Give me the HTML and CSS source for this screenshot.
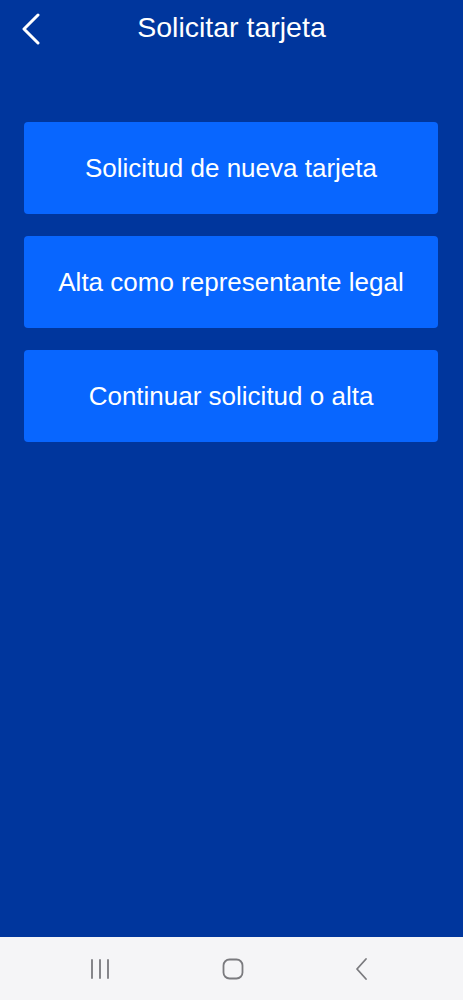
FILE: index.html
```html
<!DOCTYPE html>
<html lang="es">
<head>
<meta charset="utf-8">
<link rel="stylesheet" href="styles.css">
</head>
<body>
<div class="screen">
  <header class="topbar">
    <button class="back" aria-label="Atrás">
      <svg width="20" height="32" viewBox="0 0 20 32"><path d="M16 2 L2 16 L16 30" fill="none" stroke="#fff" stroke-width="3" stroke-linecap="round" stroke-linejoin="round"/></svg>
    </button>
    <h1 class="title">Solicitar tarjeta</h1>
  </header>
  <main class="options">
    <a class="option">Solicitud de nueva tarjeta</a>
    <a class="option">Alta como representante legal</a>
    <a class="option">Continuar solicitud o alta</a>
  </main>
  <nav class="sysnav">
    <svg width="22" height="20" viewBox="0 0 22 20"><path d="M3 1v18M11 1v18M19 1v18" stroke="#7a7a7e" stroke-width="1.8" stroke-linecap="round"/></svg>
    <svg width="22" height="22" viewBox="0 0 22 22"><rect x="1.5" y="1.5" width="19" height="19" rx="6" fill="none" stroke="#7a7a7e" stroke-width="1.8"/></svg>
    <svg width="14" height="24" viewBox="0 0 14 24"><path d="M11 2 L2 12 L11 22" fill="none" stroke="#7a7a7e" stroke-width="1.8" stroke-linecap="round" stroke-linejoin="round"/></svg>
  </nav>
</div>
</body>
</html>
```
FILE: styles.css
```css
* { box-sizing: border-box; }
html, body { margin: 0; padding: 0; }
body { font-family: "Liberation Sans", Arial, sans-serif; }
.screen {
  width: 463px;
  height: 1000px;
  background: #00369d;
  display: flex;
  flex-direction: column;
}
.topbar {
  height: 58px;
  position: relative;
  display: flex;
  align-items: center;
  justify-content: center;
}
.back {
  position: absolute;
  left: 22px;
  top: 13px;
  background: none;
  border: 0;
  padding: 0;
  width: 20px;
  height: 32px;
  display: flex;
}
.title {
  margin: 0;
  color: #fff;
  font-weight: normal;
  font-size: 28.5px;
  line-height: 1;
  margin-top: -4px;
}
.options {
  flex: 1;
  display: flex;
  flex-direction: column;
  gap: 22px;
  padding: 64px 25px 0 24px;
}
.option {
  height: 92px;
  background: #0866ff;
  border-radius: 4px;
  color: #fff;
  font-size: 26px;
  display: flex;
  align-items: center;
  justify-content: center;
}
.sysnav {
  height: 63px;
  background: #f5f5f7;
  display: flex;
  align-items: center;
  justify-content: space-between;
  padding: 0 94px 0 89px;
}
```
